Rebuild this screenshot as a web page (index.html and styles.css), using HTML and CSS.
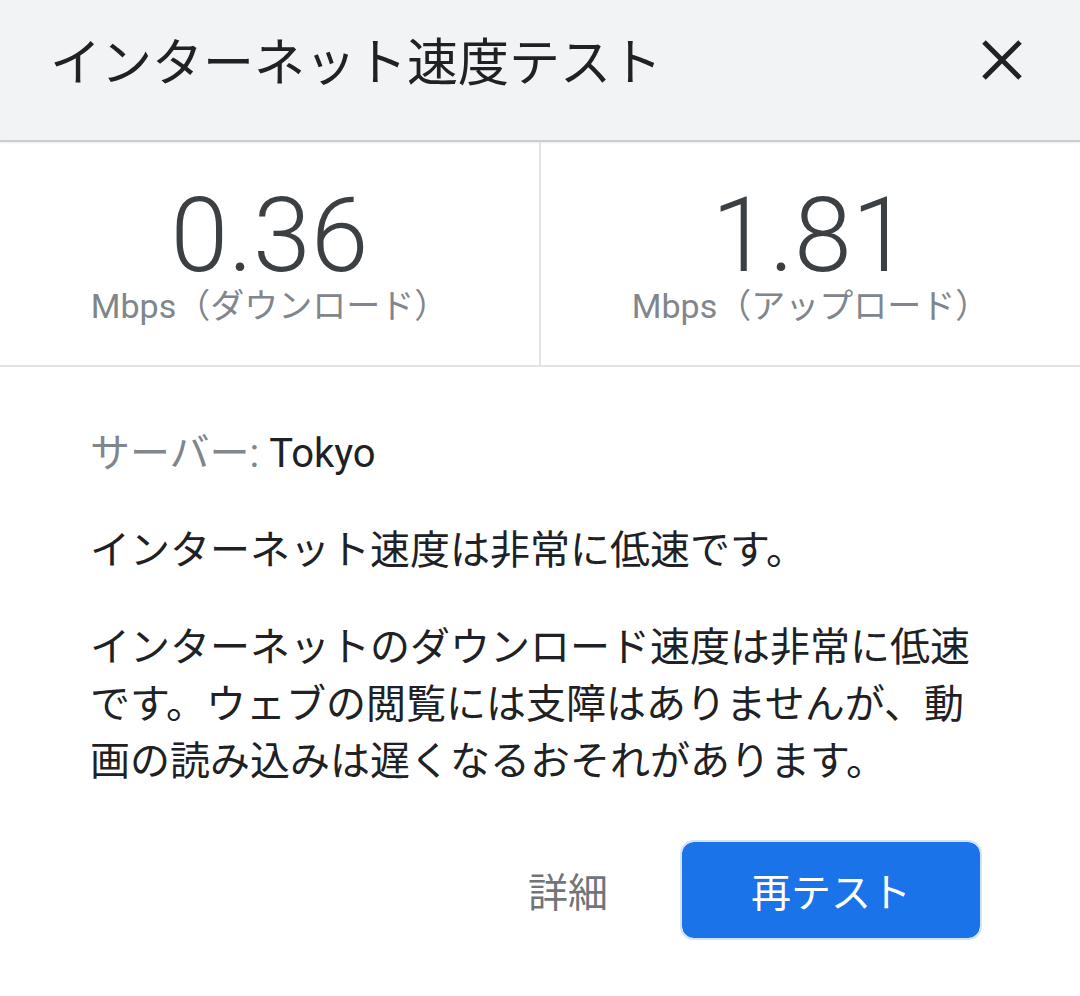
FILE: index.html
```html
<!DOCTYPE html>
<html lang="ja">
<head>
    <meta charset="UTF-8">
    <meta name="viewport" content="width=device-width, initial-scale=1.0">
    <title>インターネット速度テスト</title>
    <link rel="stylesheet" href="styles.css">
</head>
<body>
    <div class="dialog">
        <div class="header">
            <h1 class="title">インターネット速度テスト</h1>
            <button class="close-btn" aria-label="閉じる">
                <svg width="40" height="40" viewBox="0 0 40 40">
                    <path d="M2 2 L38 38 M38 2 L2 38" stroke="#202124" stroke-width="5" fill="none"/>
                </svg>
            </button>
        </div>

        <div class="stats">
            <div class="stat">
                <div class="stat-value">0.36</div>
                <div class="stat-label">Mbps（ダウンロード）</div>
            </div>
            <div class="stat">
                <div class="stat-value">1.81</div>
                <div class="stat-label">Mbps（アップロード）</div>
            </div>
        </div>

        <div class="content">
            <p class="server"><span class="server-key">サーバー:</span> Tokyo</p>
            <p class="summary">インターネット速度は非常に低速です。</p>
            <p class="detail">インターネットのダウンロード速度は非常に低速です。ウェブの閲覧には支障はありませんが、動画の読み込みは遅くなるおそれがあります。</p>

            <div class="actions">
                <button class="text-btn">詳細</button>
                <button class="primary-btn">再テスト</button>
            </div>
        </div>
    </div>
</body>
</html>
```

FILE: styles.css
```css
body {
    margin: 0;
    background: #fff;
    font-family: Roboto, "Noto Sans CJK JP", sans-serif;
    color: #202124;
}

.header {
    display: flex;
    justify-content: space-between;
    align-items: flex-start;
    height: 142px;
    box-sizing: border-box;
    padding: 34px 58px 0 50px;
    background: #f1f3f4;
    border-bottom: 2px solid #cdcdcd;
    box-shadow: 0 1px 2px rgba(0, 0, 0, 0.08);
}

.title {
    margin: 0;
    font-family: "Noto Sans CJK JP", sans-serif;
    font-size: 51px;
    font-weight: 400;
    line-height: 51px;
    color: #202124;
}

.close-btn {
    margin-top: 6px;
    padding: 0;
    border: none;
    background: none;
    width: 40px;
    height: 40px;
    cursor: pointer;
}

.close-btn svg {
    display: block;
}

.stats {
    display: grid;
    grid-template-columns: 541px 1fr;
    border-bottom: 2px solid #e3e3e3;
}

.stat {
    height: 223px;
    box-sizing: border-box;
    padding-top: 44px;
    text-align: center;
}

.stat:first-child {
    border-right: 2px solid #e3e3e3;
}

.stat-value {
    font-size: 104px;
    font-weight: 300;
    line-height: 100px;
    color: #3c4043;
}

.stat-label {
    font-size: 34px;
    line-height: 40px;
    color: #80868b;
}

.content {
    padding: 58px 90px 0 90px;
}

.content p {
    margin: 0;
    font-size: 40px;
    line-height: 57px;
}

.server-key {
    color: #80868b;
}

.summary,
.detail {
    margin-top: 40px !important;
}

.actions {
    display: flex;
    justify-content: flex-end;
    align-items: center;
    margin-top: 50px;
    margin-right: 8px;
}

.text-btn {
    margin-right: 72px;
    padding: 0;
    border: none;
    background: none;
    font-family: inherit;
    font-size: 40px;
    color: #70757a;
    cursor: pointer;
}

.primary-btn {
    width: 302px;
    height: 100px;
    border: 2px solid #d2e3fc;
    border-radius: 14px;
    background: #1a73e8;
    background-clip: padding-box;
    font-family: inherit;
    font-size: 40px;
    color: #fff;
    cursor: pointer;
}
```
